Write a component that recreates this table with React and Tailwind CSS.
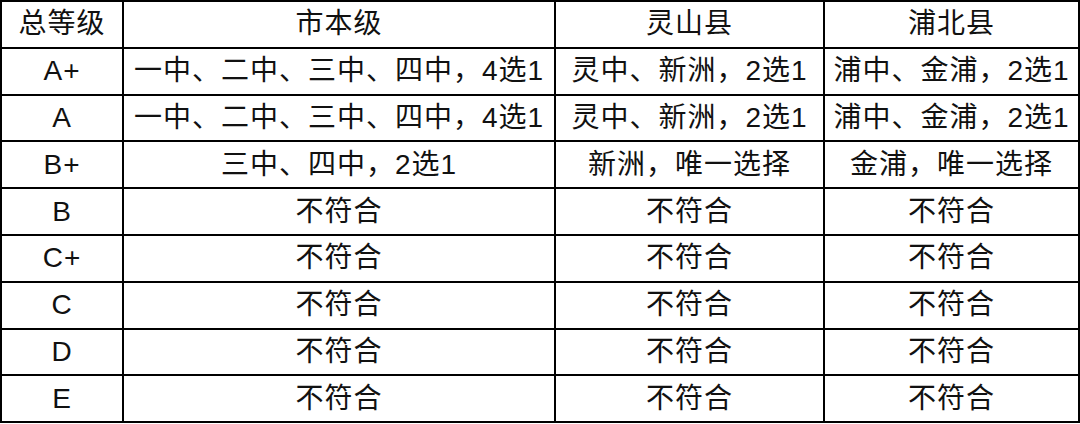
export default function App() {
  const header = ["总等级", "市本级", "灵山县", "浦北县"];
  const rows = [
    ["A+", "一中、二中、三中、四中，4选1", "灵中、新洲，2选1", "浦中、金浦，2选1"],
    ["A", "一中、二中、三中、四中，4选1", "灵中、新洲，2选1", "浦中、金浦，2选1"],
    ["B+", "三中、四中，2选1", "新洲，唯一选择", "金浦，唯一选择"],
    ["B", "不符合", "不符合", "不符合"],
    ["C+", "不符合", "不符合", "不符合"],
    ["C", "不符合", "不符合", "不符合"],
    ["D", "不符合", "不符合", "不符合"],
    ["E", "不符合", "不符合", "不符合"],
  ];
  const all = [header, ...rows];
  return (
    <div className="w-[1080px] h-[424px] bg-white">
      <div
        className="grid grid-cols-[120px_430px_267px_253px] grid-rows-[repeat(9,44.8px)] gap-[2px] p-[2px] bg-black text-[28px] text-[#111] leading-none tracking-[1px]"
        style={{ fontFamily: '"Liberation Sans", "Noto Sans CJK SC", sans-serif' }}
      >
        {all.map((r, i) =>
          r.map((c, j) => (
            <div key={i + "-" + j} className="bg-white flex items-center justify-center whitespace-nowrap">
              {c}
            </div>
          ))
        )}
      </div>
    </div>
  );
}
